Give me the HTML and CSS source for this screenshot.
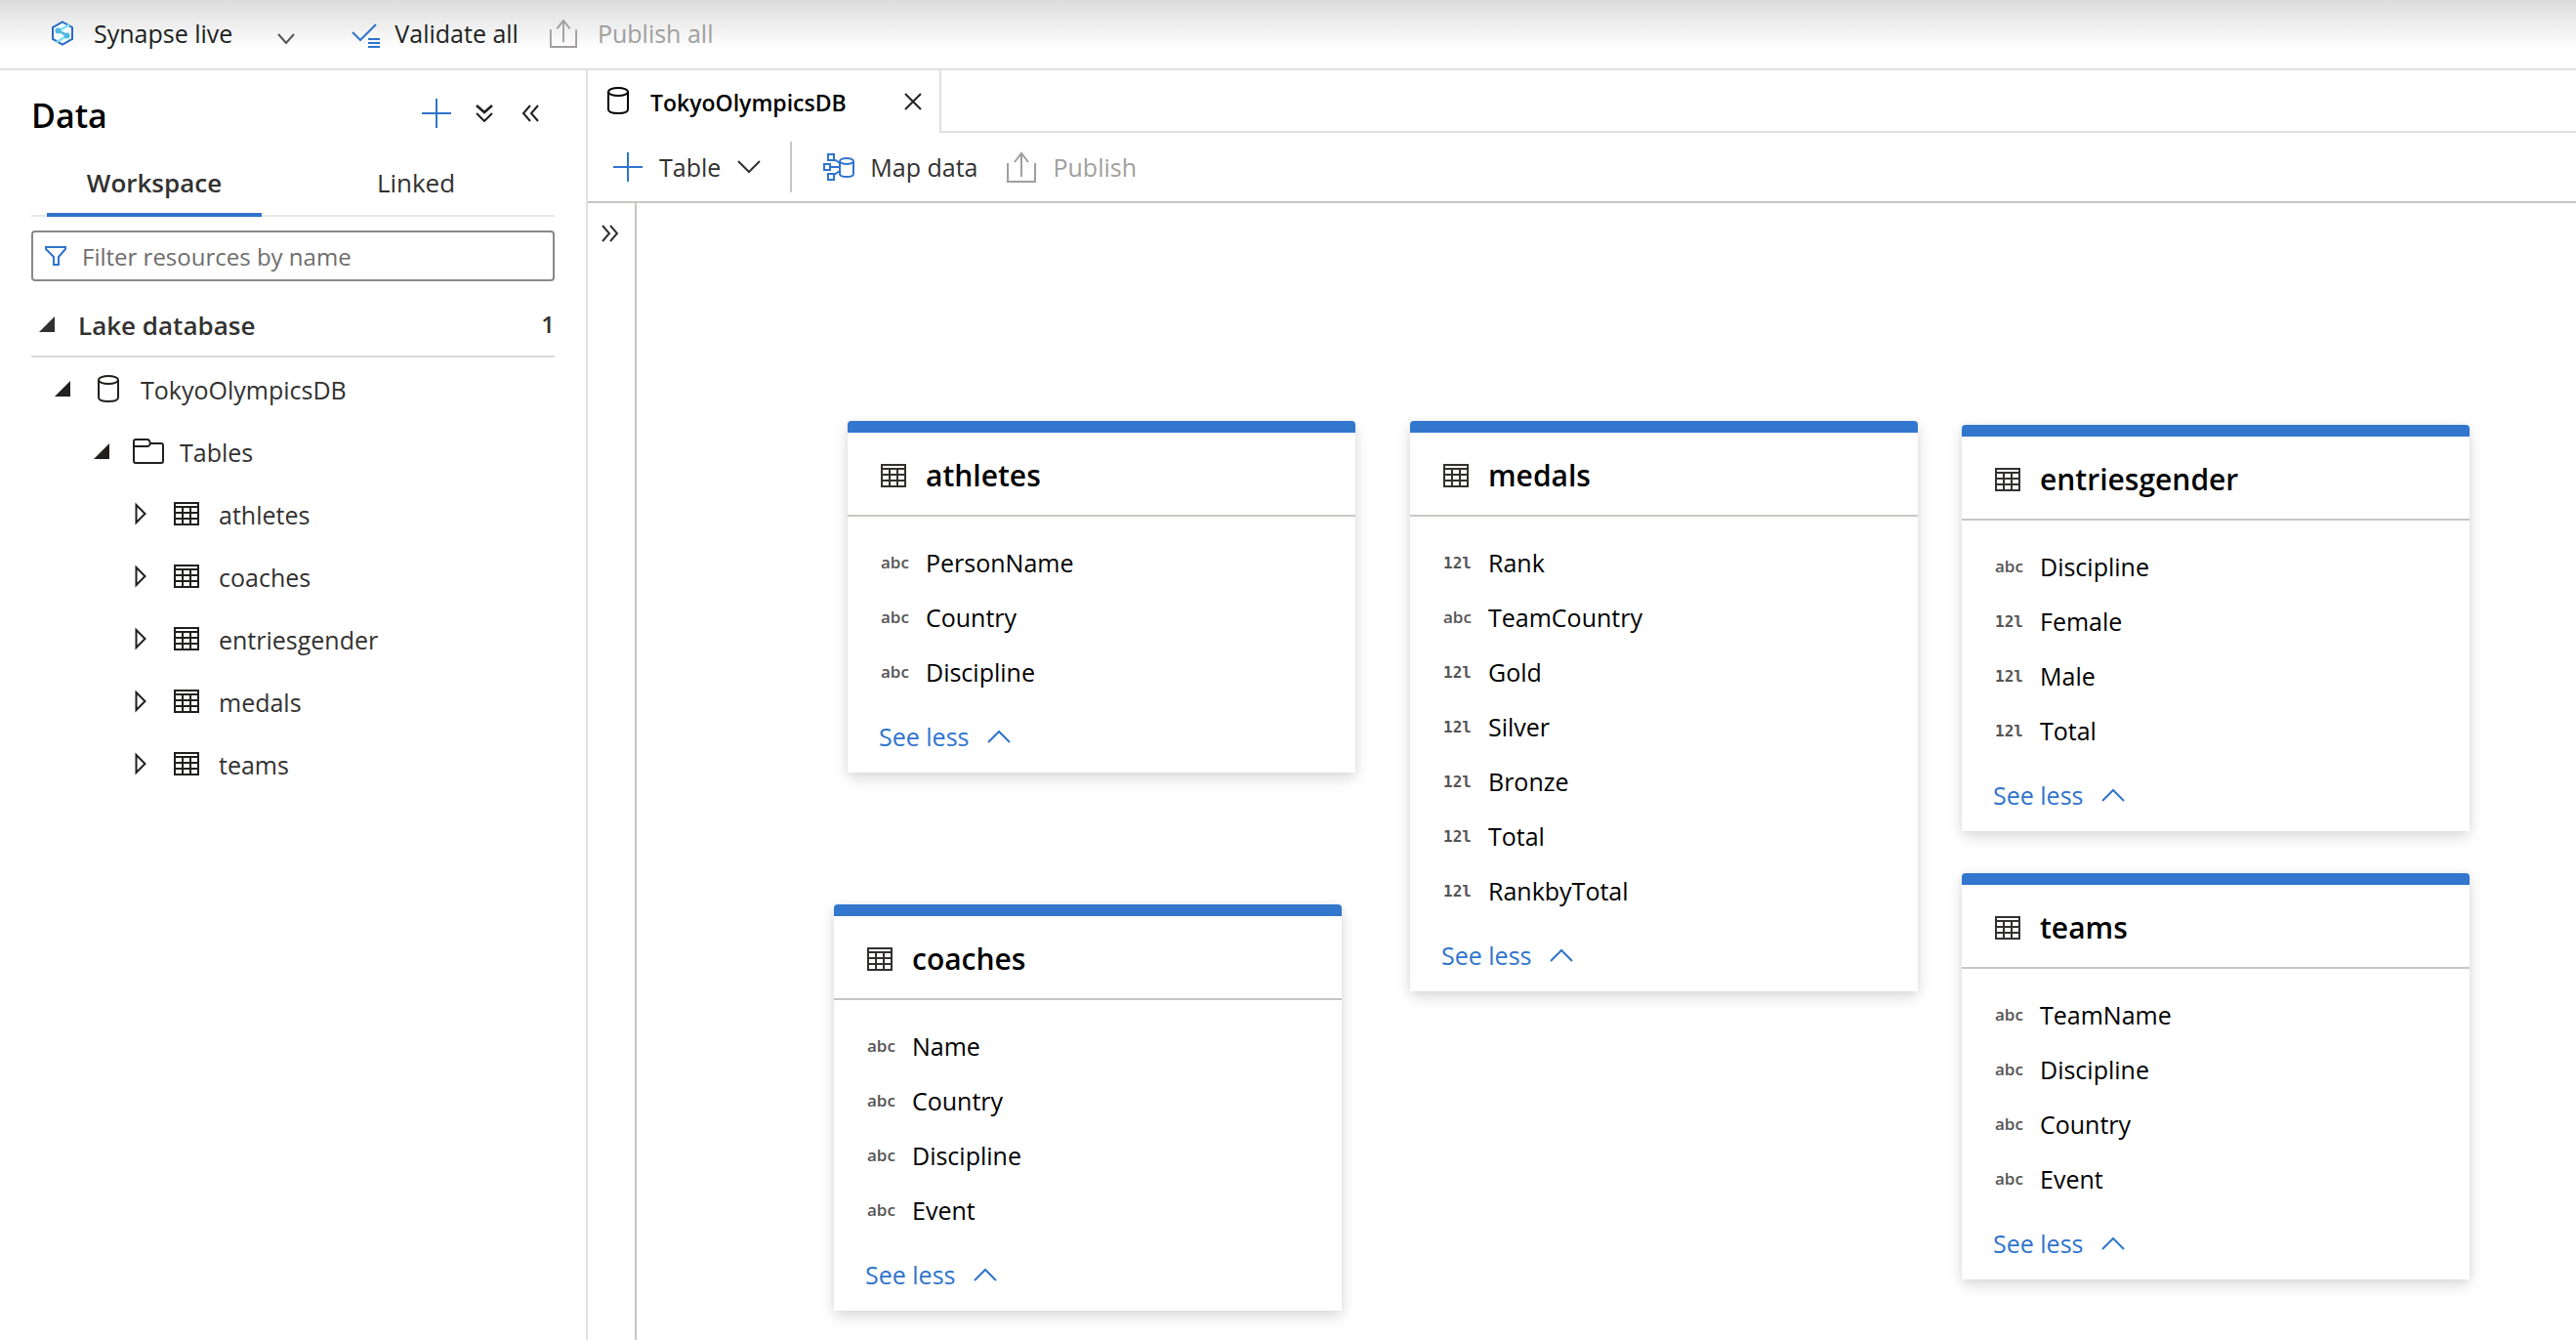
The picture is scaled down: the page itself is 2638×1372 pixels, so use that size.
FILE: index.html
```html
<!DOCTYPE html>
<html lang="en">
<head>
<meta charset="utf-8">
<title>TokyoOlympicsDB - Synapse Studio</title>
<link rel="stylesheet" href="styles.css">
</head>
<body>
<svg class="sprite" aria-hidden="true">
  <symbol id="i-table" viewBox="0 0 26 24"><path d="M1 1h24v22H1zM1 5h24M1 11h24M1 17h24M9 5v18M17 5v18" fill="none" stroke="currentColor" stroke-width="2"/></symbol>
  <symbol id="i-db" viewBox="0 0 22 28"><path d="M1 5v18c0 2.600 4 4 10 4s10-1.400 10-4V5" fill="none" stroke="currentColor" stroke-width="2"/><ellipse cx="11" cy="5" rx="10" ry="4" fill="none" stroke="currentColor" stroke-width="2"/></symbol>
  <symbol id="i-open" viewBox="0 0 16 16"><path d="M16 0v16H0z" fill="currentColor"/></symbol>
  <symbol id="i-closed" viewBox="0 0 12 24"><path d="M1.500 3v18L10.500 12z" fill="none" stroke="currentColor" stroke-width="2"/></symbol>
  <symbol id="i-plus" viewBox="0 0 30 30"><path d="M15 0v30M0 15h30" fill="none" stroke="currentColor" stroke-width="2"/></symbol>
  <symbol id="i-publish" viewBox="0 0 30 32"><path d="M1 12v19h28V12M15 26V2M8 11l7-9 7 9" fill="none" stroke="currentColor" stroke-width="2"/></symbol>
  <symbol id="i-down" viewBox="0 0 24 14"><path d="M1 1l11 11L23 1" fill="none" stroke="currentColor" stroke-width="2"/></symbol>
  <symbol id="i-up" viewBox="0 0 24 14"><path d="M1 13L12 2l11 11" fill="none" stroke="currentColor" stroke-width="2"/></symbol>
  <symbol id="i-left" viewBox="0 0 18 18"><path d="M9 1L2 9l7 8M17 1l-7 8 7 8" fill="none" stroke="currentColor" stroke-width="2"/></symbol>
  <symbol id="i-right" viewBox="0 0 18 18"><path d="M1 1l7 8-7 8M9 1l7 8-7 8" fill="none" stroke="currentColor" stroke-width="2"/></symbol>
</svg>

<header class="topbar">
  <button class="cmd live" type="button">
    <svg width="24" height="26" viewBox="0 0 24 26"><path d="M12 1.500l10 5.700v11.600l-10 5.700-10-5.700V7.200z" fill="#f6fbfe" stroke="#2b6ac4" stroke-width="2"/><path d="M19 4.500L8 10.500l9 5-11 6.500" fill="none" stroke="#7fe0f5" stroke-width="2.500"/><path d="M8 10.500l9 5" stroke="#4fb4dc" stroke-width="2.500"/><circle cx="7.500" cy="10.500" r="3" fill="#4fb9e0"/><circle cx="16.500" cy="15.500" r="3" fill="#4fb9e0"/></svg>
    <span>Synapse live</span>
    <svg class="caret" width="18" height="12" viewBox="0 0 18 12"><path d="M1 1l8 9 8-9" fill="none" stroke="#555" stroke-width="2"/></svg>
  </button>
  <button class="cmd validate" type="button">
    <svg class="low" width="30" height="26" viewBox="0 0 30 26"><path d="M1 9l8 8L25 1" fill="none" stroke="#2f74cd" stroke-width="2"/><path d="M17 16h12M17 20h12M17 24h12" stroke="#2f74cd" stroke-width="2"/></svg>
    <span>Validate all</span>
  </button>
  <button class="cmd publish-all" type="button" disabled>
    <svg width="28" height="30"><use href="#i-publish"/></svg>
    <span>Publish all</span>
  </button>
</header>

<div class="shell">
  <aside class="sidebar">
    <div class="side-head">
      <h1>Data</h1>
      <button type="button" class="blue" aria-label="Add"><svg width="30" height="30"><use href="#i-plus"/></svg></button>
      <button type="button" aria-label="Expand all"><svg width="18" height="18" viewBox="0 0 18 18"><path d="M1 1l8 7 8-7" fill="none" stroke="currentColor" stroke-width="2.500"/><path d="M1 9l8 8 8-8" fill="none" stroke="currentColor" stroke-width="2"/></svg></button>
      <button type="button" aria-label="Collapse pane"><svg width="18" height="18"><use href="#i-left"/></svg></button>
    </div>
    <div class="tabs" role="tablist">
      <button type="button" role="tab" aria-selected="true">Workspace</button>
      <button type="button" role="tab" aria-selected="false">Linked</button>
    </div>
    <label class="filter">
      <svg width="22" height="20" viewBox="0 0 22 20"><path d="M1 1h20v2l-7 8v8H9v-8L1 3z" fill="none" stroke="#2f74cd" stroke-width="2"/></svg>
      <input type="text" placeholder="Filter resources by name" aria-label="Filter resources by name">
    </label>
    <div class="group">
      <svg width="16" height="16"><use href="#i-open"/></svg>
      <h2>Lake database</h2>
      <span class="count">1</span>
    </div>
    <ul class="tree">
      <li class="lvl1"><svg width="16" height="16"><use href="#i-open"/></svg><svg class="ico" width="22" height="28"><use href="#i-db"/></svg><span>TokyoOlympicsDB</span></li>
      <li class="lvl2"><svg width="16" height="16"><use href="#i-open"/></svg><svg class="ico" width="32" height="26" viewBox="0 0 32 26"><path d="M1 23V3q0-2 2-2h12q2 0 3 4h11q2 0 2 2v16q0 2-2 2H3q-2 0-2-2zM1 8h14q2 0 3-3" fill="none" stroke="currentColor" stroke-width="2"/></svg><span>Tables</span></li>
      <li class="lvl3"><svg width="12" height="24"><use href="#i-closed"/></svg><svg class="ico" width="26" height="24"><use href="#i-table"/></svg><span>athletes</span></li>
      <li class="lvl3"><svg width="12" height="24"><use href="#i-closed"/></svg><svg class="ico" width="26" height="24"><use href="#i-table"/></svg><span>coaches</span></li>
      <li class="lvl3"><svg width="12" height="24"><use href="#i-closed"/></svg><svg class="ico" width="26" height="24"><use href="#i-table"/></svg><span>entriesgender</span></li>
      <li class="lvl3"><svg width="12" height="24"><use href="#i-closed"/></svg><svg class="ico" width="26" height="24"><use href="#i-table"/></svg><span>medals</span></li>
      <li class="lvl3"><svg width="12" height="24"><use href="#i-closed"/></svg><svg class="ico" width="26" height="24"><use href="#i-table"/></svg><span>teams</span></li>
    </ul>
  </aside>

  <main class="main">
    <div class="doc-tabs">
      <div class="doc-tab">
        <svg width="22" height="28"><use href="#i-db"/></svg>
        <span>TokyoOlympicsDB</span>
        <button type="button" aria-label="Close tab"><svg width="18" height="18" viewBox="0 0 18 18"><path d="M1 1l16 16M17 1L1 17" fill="none" stroke="#222" stroke-width="2"/></svg></button>
      </div>
    </div>
    <div class="toolbar">
      <button class="cmd add-table" type="button">
        <svg class="blue" width="30" height="30"><use href="#i-plus"/></svg>
        <span>Table</span>
        <svg width="24" height="14"><use href="#i-down"/></svg>
      </button>
      <button class="cmd map" type="button">
        <svg class="blue" width="32" height="28" viewBox="0 0 32 28"><path d="M5 1h6v6H5zM1 11h6v6H1zM5 21h6v6H5zM11 6l6 4M7 14h10M11 22l6-4M17 8v13c0 2 3 3 7 3s7-1 7-3V8" fill="none" stroke="currentColor" stroke-width="2"/><ellipse cx="24" cy="8" rx="7" ry="3" fill="none" stroke="currentColor" stroke-width="2"/></svg>
        <span>Map data</span>
      </button>
      <button class="cmd publish" type="button" disabled>
        <svg width="30" height="32"><use href="#i-publish"/></svg>
        <span>Publish</span>
      </button>
    </div>
    <div class="work">
      <div class="rail"><button type="button" aria-label="Expand pane"><svg width="18" height="18"><use href="#i-right"/></svg></button></div>
      <div class="canvas">
        <section class="card athletes">
          <h3><svg width="26" height="24"><use href="#i-table"/></svg>athletes</h3>
          <ul>
            <li><i>abc</i>PersonName</li>
            <li><i>abc</i>Country</li>
            <li><i>abc</i>Discipline</li>
          </ul>
          <button type="button">See less<svg width="24" height="14"><use href="#i-up"/></svg></button>
        </section>
        <section class="card coaches">
          <h3><svg width="26" height="24"><use href="#i-table"/></svg>coaches</h3>
          <ul>
            <li><i>abc</i>Name</li>
            <li><i>abc</i>Country</li>
            <li><i>abc</i>Discipline</li>
            <li><i>abc</i>Event</li>
          </ul>
          <button type="button">See less<svg width="24" height="14"><use href="#i-up"/></svg></button>
        </section>
        <section class="card medals">
          <h3><svg width="26" height="24"><use href="#i-table"/></svg>medals</h3>
          <ul>
            <li><i class="num">12l</i>Rank</li>
            <li><i>abc</i>TeamCountry</li>
            <li><i class="num">12l</i>Gold</li>
            <li><i class="num">12l</i>Silver</li>
            <li><i class="num">12l</i>Bronze</li>
            <li><i class="num">12l</i>Total</li>
            <li><i class="num">12l</i>RankbyTotal</li>
          </ul>
          <button type="button">See less<svg width="24" height="14"><use href="#i-up"/></svg></button>
        </section>
        <section class="card entriesgender">
          <h3><svg width="26" height="24"><use href="#i-table"/></svg>entriesgender</h3>
          <ul>
            <li><i>abc</i>Discipline</li>
            <li><i class="num">12l</i>Female</li>
            <li><i class="num">12l</i>Male</li>
            <li><i class="num">12l</i>Total</li>
          </ul>
          <button type="button">See less<svg width="24" height="14"><use href="#i-up"/></svg></button>
        </section>
        <section class="card teams">
          <h3><svg width="26" height="24"><use href="#i-table"/></svg>teams</h3>
          <ul>
            <li><i>abc</i>TeamName</li>
            <li><i>abc</i>Discipline</li>
            <li><i>abc</i>Country</li>
            <li><i>abc</i>Event</li>
          </ul>
          <button type="button">See less<svg width="24" height="14"><use href="#i-up"/></svg></button>
        </section>
      </div>
    </div>
  </main>
</div>
</body>
</html>
```
FILE: styles.css
```css
* { box-sizing: border-box; }

body {
  margin: 0;
  min-height: 100vh;
  display: flex;
  flex-direction: column;
  font: 25px/36px "Open Sans", "Noto Sans", sans-serif;
  color: #323130;
  background: #fff;
}

.sprite { position: absolute; width: 0; height: 0; }
svg { display: block; flex: none; }
h1, h2, h3, ul { margin: 0; padding: 0; list-style: none; }

button {
  display: flex;
  align-items: center;
  padding: 0;
  border: 0;
  background: none;
  color: inherit;
  font: inherit;
  white-space: nowrap;
}

button:disabled { color: #a19f9d; }
.blue { color: #2f74cd; }

/* Top command bar */
.topbar {
  display: flex;
  height: 72px;
  padding: 0 52px 2px;
  border-bottom: 2px solid #e0e0e0;
  background: linear-gradient(#dcdcdc, #fff 50px);
  color: #201f1e;
}
.live { gap: 20px; margin-right: 58px; }
.live .caret { margin: 12px 0 0 26px; }
.validate { gap: 14px; margin-right: 32px; }
.validate .low { margin-top: 6px; }
.publish-all { gap: 21px; }

.shell { flex: 1; display: flex; }

/* Resource pane */
.sidebar {
  flex: none;
  width: 602px;
  padding: 0 32px;
  border-right: 2px solid #e0e0e0;
}
.side-head {
  display: flex;
  align-items: center;
  height: 88px;
  padding-right: 16px;
  gap: 25px;
  color: #201f1e;
}
.side-head h1 { margin-right: auto; padding-top: 4px; font-size: 34px; font-weight: 600; color: #000; }
.side-head button:last-child { margin-left: 4px; }
.side-head .blue { color: #2f74cd; }

.tabs {
  display: grid;
  grid-template-columns: 1fr 1fr;
  height: 62px;
  box-shadow: inset 0 -2px #e8e8e8;
}
.tabs button {
  justify-content: center;
  margin: 0 32px 0 16px;
  padding-bottom: 4px;
  border-bottom: 4px solid transparent;
  font-size: 26px;
}
.tabs [aria-selected="true"] { border-color: #2f74cd; font-weight: 600; }

.filter {
  display: flex;
  align-items: center;
  gap: 16px;
  height: 52px;
  margin-top: 14px;
  padding: 0 12px;
  border: 2px solid #8a8886;
  border-radius: 4px;
}
.filter input {
  flex: 1;
  min-width: 0;
  padding: 2px 0 0;
  border: 0;
  outline: 0;
  font: inherit;
  font-size: 24px;
}
.filter input::placeholder { color: #6f6d6b; opacity: 1; }

.group {
  display: flex;
  align-items: center;
  height: 66px;
  margin-top: 12px;
  padding-left: 8px;
  border-bottom: 2px solid #dcdcdc;
}
.group h2 { margin-left: 24px; padding-top: 2px; font-size: 26px; font-weight: 600; }
.count { margin-left: auto; font-size: 24px; font-weight: 600; }

.tree li { display: flex; align-items: center; height: 64px; }
.tree span { padding-top: 2px; }
.tree svg { color: #201f1e; }
.lvl1 { padding-left: 24px; }
.lvl1 .ico { margin: 0 22px 0 28px; }
.lvl2 { padding-left: 64px; }
.lvl2 .ico { margin: 0 16px 0 24px; }
.lvl3 { padding-left: 106px; }
.lvl3 .ico { margin: 0 20px 0 28px; }

/* Document area */
.main { flex: 1; min-width: 0; display: flex; flex-direction: column; }
.doc-tabs { display: flex; height: 64px; }
.doc-tabs::after { content: ""; flex: 1; border-bottom: 2px solid #e0e0e0; }
.doc-tab {
  display: flex;
  align-items: center;
  width: 362px;
  padding: 0 18px 2px 20px;
  border-right: 2px solid #e0e0e0;
  font-size: 23px;
  font-weight: 600;
  color: #000;
}
.doc-tab span { margin-left: 22px; padding-top: 4px; }
.doc-tab button { margin-left: auto; padding-top: 2px; }

.toolbar {
  display: flex;
  height: 72px;
  padding: 0 26px;
  border-bottom: 2px solid #c8c6c4;
}
.toolbar .cmd { height: 70px; }
.add-table { gap: 17px; }
.add-table::after { content: ""; width: 2px; height: 52px; margin-left: 13px; background: #c8c6c4; }
.map { gap: 16px; margin: 0 30px 0 32px; }
.publish { gap: 17px; }

.work { flex: 1; display: flex; }
.rail {
  flex: none;
  width: 50px;
  padding: 22px 14px;
  border-right: 2px solid #c8c6c4;
}

/* Diagram canvas: nodes are placed freely */
.canvas { position: relative; flex: 1; overflow: hidden; }
.card {
  position: absolute;
  width: 520px;
  padding-bottom: 8px;
  border-top: 12px solid #3276cd;
  border-radius: 4px 4px 0 0;
  background: #fff;
  box-shadow: 0 6px 16px rgba(0, 0, 0, .14), 0 0 6px rgba(0, 0, 0, .06);
  color: #000;
}
.card h3 {
  display: flex;
  align-items: center;
  gap: 20px;
  height: 86px;
  padding: 4px 34px 0;
  border-bottom: 2px solid #c8c6c4;
  font-size: 30px;
  font-weight: 600;
}
.card svg { color: #323130; }
.card ul { padding: 19px 34px 0; }
.card li { display: flex; align-items: center; height: 56px; }
.card i {
  width: 46px;
  font: 600 17px/24px "Open Sans", "Noto Sans", sans-serif;
  color: #555;
}
.card .num { padding-top: 2px; font: 700 16px/24px "DejaVu Sans Mono", monospace; }
.card button { gap: 19px; height: 59px; padding: 0 32px; margin-top: 8px; color: #2f74cd; }
.card button svg { color: inherit; }

.athletes { left: 216px; top: 223px; }
.coaches { left: 202px; top: 718px; }
.medals { left: 792px; top: 223px; }
.entriesgender { left: 1357px; top: 227px; }
.teams { left: 1357px; top: 686px; }
```
